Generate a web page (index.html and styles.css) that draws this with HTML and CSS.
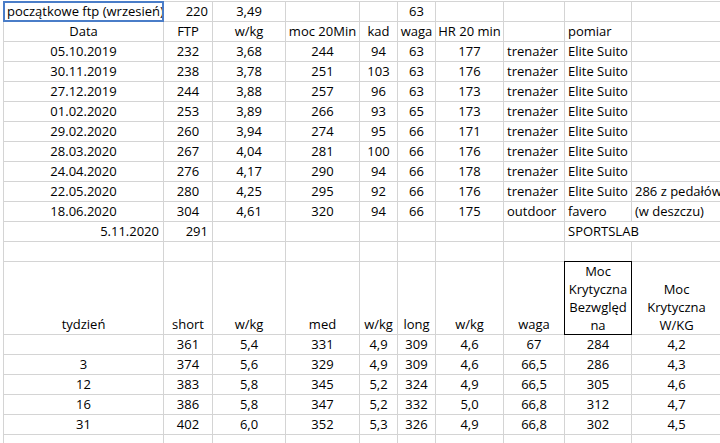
FILE: index.html
```html
<!DOCTYPE html>
<html lang="pl">
<head>
<meta charset="utf-8">
<title>Arkusz FTP</title>
<link rel="stylesheet" href="styles.css">
</head>
<body>
<div class="sheet">
  <div class="row">
    <div class="l sel">początkowe ftp (wrzesień)</div><div class="r">220</div><div class="c">3,49</div><div></div><div></div><div class="c">63</div><div></div><div></div><div></div><div></div>
  </div>
  <div class="row">
    <div class="c">Data</div><div class="c">FTP</div><div class="c">w/kg</div><div class="c">moc 20Min</div><div class="c">kad</div><div class="c">waga</div><div class="c">HR 20 min</div><div></div><div class="l">pomiar</div><div></div>
  </div>
  <div class="row">
    <div class="c">05.10.2019</div><div class="c">232</div><div class="c">3,68</div><div class="c">244</div><div class="c">94</div><div class="c">63</div><div class="c">177</div><div class="l">trenażer</div><div class="l">Elite Suito</div><div></div>
  </div>
  <div class="row">
    <div class="c">30.11.2019</div><div class="c">238</div><div class="c">3,78</div><div class="c">251</div><div class="c">103</div><div class="c">63</div><div class="c">176</div><div class="l">trenażer</div><div class="l">Elite Suito</div><div></div>
  </div>
  <div class="row">
    <div class="c">27.12.2019</div><div class="c">244</div><div class="c">3,88</div><div class="c">257</div><div class="c">96</div><div class="c">63</div><div class="c">173</div><div class="l">trenażer</div><div class="l">Elite Suito</div><div></div>
  </div>
  <div class="row">
    <div class="c">01.02.2020</div><div class="c">253</div><div class="c">3,89</div><div class="c">266</div><div class="c">93</div><div class="c">65</div><div class="c">173</div><div class="l">trenażer</div><div class="l">Elite Suito</div><div></div>
  </div>
  <div class="row">
    <div class="c">29.02.2020</div><div class="c">260</div><div class="c">3,94</div><div class="c">274</div><div class="c">95</div><div class="c">66</div><div class="c">171</div><div class="l">trenażer</div><div class="l">Elite Suito</div><div></div>
  </div>
  <div class="row">
    <div class="c">28.03.2020</div><div class="c">267</div><div class="c">4,04</div><div class="c">281</div><div class="c">100</div><div class="c">66</div><div class="c">176</div><div class="l">trenażer</div><div class="l">Elite Suito</div><div></div>
  </div>
  <div class="row">
    <div class="c">24.04.2020</div><div class="c">276</div><div class="c">4,17</div><div class="c">290</div><div class="c">94</div><div class="c">66</div><div class="c">178</div><div class="l">trenażer</div><div class="l">Elite Suito</div><div></div>
  </div>
  <div class="row">
    <div class="c">22.05.2020</div><div class="c">280</div><div class="c">4,25</div><div class="c">295</div><div class="c">92</div><div class="c">66</div><div class="c">176</div><div class="l">trenażer</div><div class="l">Elite Suito</div><div class="l">286 z pedałów</div>
  </div>
  <div class="row">
    <div class="c">18.06.2020</div><div class="c">304</div><div class="c">4,61</div><div class="c">320</div><div class="c">94</div><div class="c">66</div><div class="c">175</div><div class="l">outdoor</div><div class="l">favero</div><div class="l">(w deszczu)</div>
  </div>
  <div class="row">
    <div class="r">5.11.2020</div><div class="r">291</div><div></div><div></div><div></div><div></div><div></div><div></div><div class="l span2">SPORTSLAB</div>
  </div>
  <div class="row">
    <div></div><div></div><div></div><div></div><div></div><div></div><div></div><div></div><div></div><div></div>
  </div>
  <div class="row">
    <div class="c">tydzień</div><div class="c">short</div><div class="c">w/kg</div><div class="c">med</div><div class="c">w/kg</div><div class="c">long</div><div class="c">w/kg</div><div class="c">waga</div><div class="c wrap boxed">Moc<br>Krytyczna<br>Bezwględ<br>na</div><div class="c wrap">Moc<br>Krytyczna<br>W/KG</div>
  </div>
  <div class="row">
    <div></div><div class="c">361</div><div class="c">5,4</div><div class="c">331</div><div class="c">4,9</div><div class="c">309</div><div class="c">4,6</div><div class="c">67</div><div class="c">284</div><div class="c">4,2</div>
  </div>
  <div class="row">
    <div class="c">3</div><div class="c">374</div><div class="c">5,6</div><div class="c">329</div><div class="c">4,9</div><div class="c">309</div><div class="c">4,6</div><div class="c">66,5</div><div class="c">286</div><div class="c">4,3</div>
  </div>
  <div class="row">
    <div class="c">12</div><div class="c">383</div><div class="c">5,8</div><div class="c">345</div><div class="c">5,2</div><div class="c">324</div><div class="c">4,9</div><div class="c">66,5</div><div class="c">305</div><div class="c">4,6</div>
  </div>
  <div class="row">
    <div class="c">16</div><div class="c">386</div><div class="c">5,8</div><div class="c">347</div><div class="c">5,2</div><div class="c">332</div><div class="c">5,0</div><div class="c">66,8</div><div class="c">312</div><div class="c">4,7</div>
  </div>
  <div class="row">
    <div class="c">31</div><div class="c">402</div><div class="c">6,0</div><div class="c">352</div><div class="c">5,3</div><div class="c">326</div><div class="c">4,9</div><div class="c">66,8</div><div class="c">302</div><div class="c">4,5</div>
  </div>
  <div class="row">
    <div></div><div></div><div></div><div></div><div></div><div></div><div></div><div></div><div></div><div></div>
  </div>
</div>
</body>
</html>
```

FILE: styles.css
```css
html, body {
  margin: 0;
  padding: 0;
  background: #ffffff;
  overflow: hidden;
}

body {
  font-family: "Open Sans", "Noto Sans", sans-serif;
  font-size: 13px;
  color: #000000;
}

.sheet {
  display: grid;
  grid-template-columns: 159px 48px 72px 73px 37px 37px 67px 60px 66px 89px;
  grid-template-rows: repeat(13, 19px) 72px repeat(6, 19px);
  gap: 1px;
  padding: 1px 0 0 1px;
  margin: 1px 0 0 3px;
  background: #d4d4d4;
  width: max-content;
}

.row {
  display: contents;
}

.row > div {
  background: #ffffff;
  line-height: 19px;
  white-space: nowrap;
  display: flex;
  flex-direction: column;
  justify-content: flex-end;
  min-width: 0;
}

.l { text-align: left; padding-left: 3px; }
.c { text-align: center; }
.r { text-align: right; padding-right: 4px; }

.span2 {
  grid-column: span 2;
}

.row > .wrap {
  line-height: 18px;
}

.sel {
  outline: 2px solid #4a7dc8;
  outline-offset: -1px;
  position: relative;
  z-index: 2;
}

.boxed {
  outline: 1px solid #000000;
  position: relative;
  z-index: 2;
}
```
